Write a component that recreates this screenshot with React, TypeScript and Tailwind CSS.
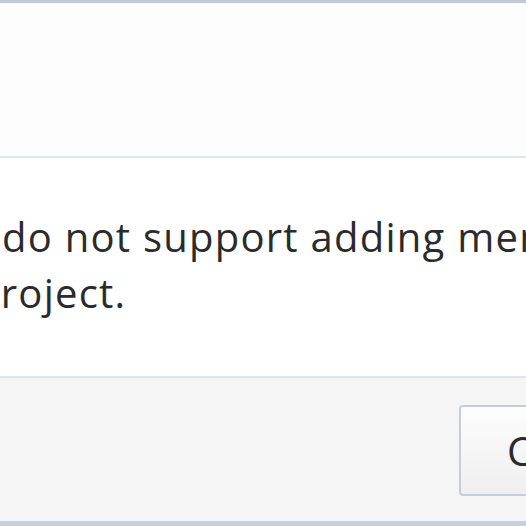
import React from "react";

export default function App() {
  return (
    <div
      className="w-[526px] h-[526px] overflow-hidden flex flex-col bg-white text-[#2b2b2b]"
      style={{ fontFamily: '"Open Sans", "Noto Sans", sans-serif' }}
    >
      <div className="h-[3px] shrink-0 bg-[#bccad8]" />
      <div className="h-[153px] shrink-0 bg-[#fdfdfe]" />
      <div className="h-[2px] shrink-0 bg-[#dde5ed]" />
      <div className="h-[218px] shrink-0 bg-white overflow-hidden pt-[51px] pl-[2px]">
        <p className="text-[40px] leading-[56px] tracking-[1.25px] whitespace-nowrap">do not support adding members to this</p>
        <p className="text-[40px] leading-[56px] tracking-[1.25px] whitespace-nowrap ml-[-27px]">project.</p>
      </div>
      <div className="h-[2px] shrink-0 bg-[#dde5ed]" />
      <div className="h-[143px] shrink-0 bg-[#f5f5f5] pt-[27px] pl-[459px] overflow-hidden">
        <button className="h-[91px] w-[160px] rounded-[4px] border-2 border-[#c6cdd8] bg-gradient-to-b from-[#fdfdfd] to-[#efefef] text-[40px] text-left pl-[46px] text-[#2b2b2b]">
          Close
        </button>
      </div>
      <div className="h-[5px] shrink-0 bg-[#c5d2de]" />
    </div>
  );
}
